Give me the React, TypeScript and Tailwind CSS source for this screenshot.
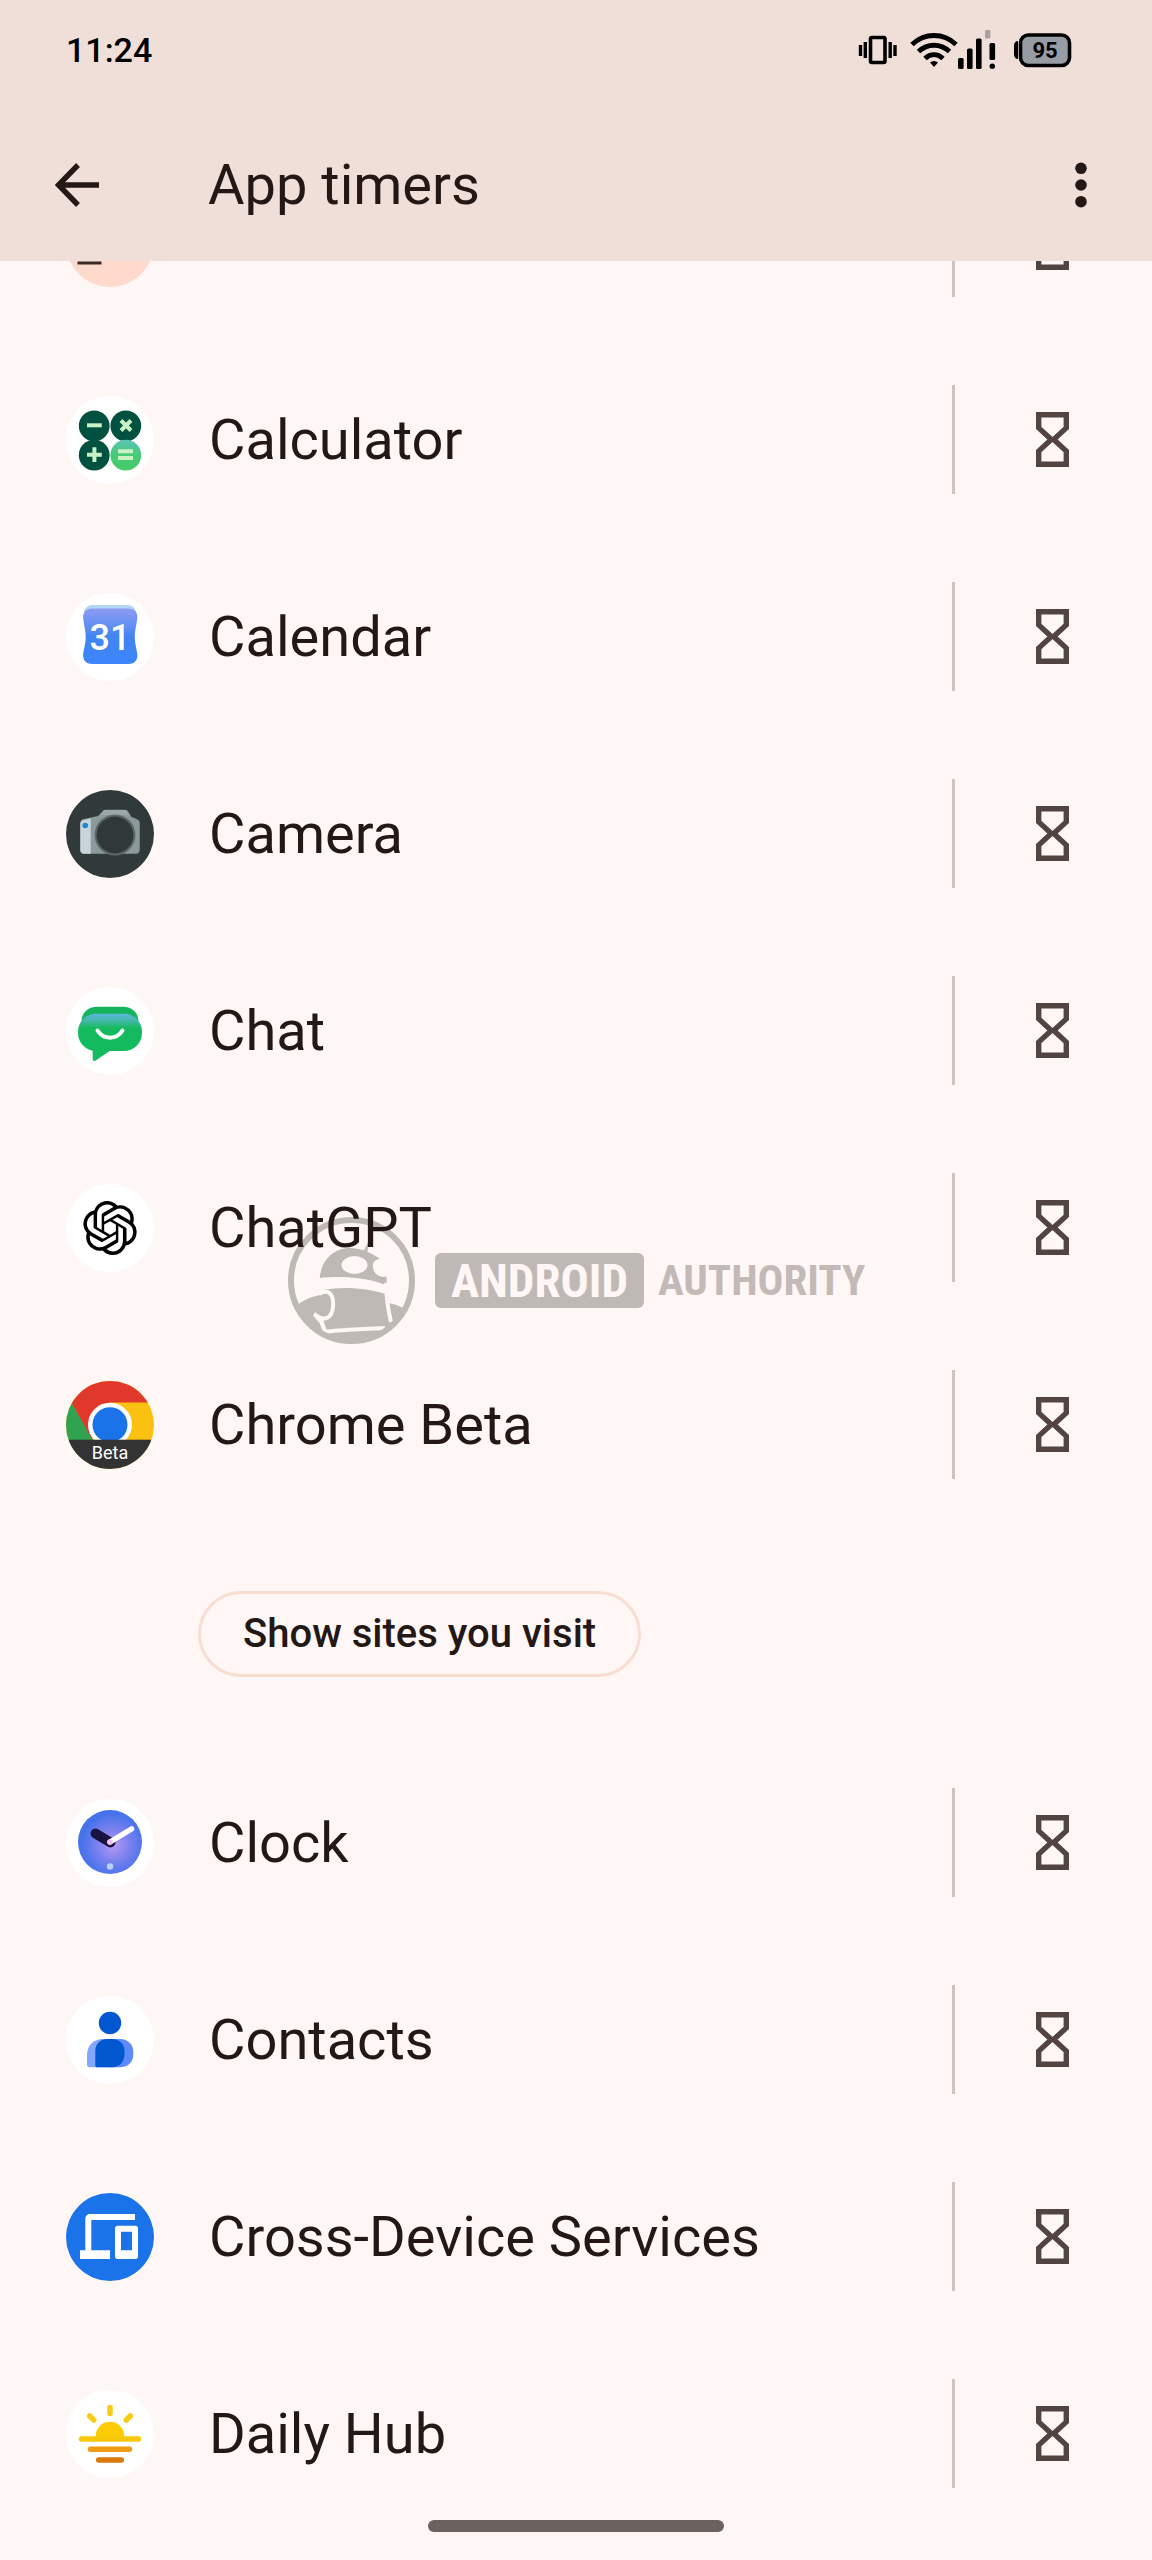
import type { ReactNode } from "react";
import { SiOpenai } from "react-icons/si";

function Disc({ fill = "#ffffff", children }: { fill?: string; children?: ReactNode }) {
  return (
    <svg viewBox="0 0 88 88" className="size-[88px] shrink-0" aria-hidden="true">
      <circle cx="44" cy="44" r="44" fill={fill} />
      {children}
    </svg>
  );
}

function CalculatorIcon() {
  return (
    <Disc>
      <defs>
        <linearGradient id="calc-eq" x1="0" y1="0" x2="0" y2="1">
          <stop offset="0" stopColor="#5cc4b8" />
          <stop offset="0.5" stopColor="#46cb76" />
          <stop offset="1" stopColor="#45cc66" />
        </linearGradient>
      </defs>
      <circle cx="28.2" cy="29.8" r="15.4" fill="#00513f" />
      <circle cx="59.8" cy="29.8" r="15.4" fill="#00513f" />
      <circle cx="28.2" cy="59.2" r="15.4" fill="#00513f" />
      <circle cx="59.8" cy="59.2" r="15.4" fill="url(#calc-eq)" />
      <g stroke="#c9f2c4" strokeWidth="4" fill="none">
        <path d="M21 29.3h14.8" />
        <path d="M55 24.5l10 10M65 24.5l-10 10" />
        <path d="M21 58.7h14.8M28.4 51.3v14.8" />
        <path d="M52 55.3h15M52 62h15" />
      </g>
    </Disc>
  );
}

function CalendarIcon() {
  return (
    <Disc>
      <defs>
        <linearGradient id="cal-bg" x1="0" y1="0" x2="0" y2="1">
          <stop offset="0" stopColor="#8f9bf3" />
          <stop offset="0.28" stopColor="#6690f5" />
          <stop offset="0.5" stopColor="#4285f0" />
          <stop offset="1" stopColor="#3c85fb" />
        </linearGradient>
      </defs>
      <path d="M26 12h36c4 0 7 3 8 7H18c1-4 4-7 8-7z" fill="#b5d6f3" />
      <path
        d="M26 15.500h36.500c6 0 9.500 4 8.800 10-1 8-2.500 12-2.500 18.500 0 6 1.500 10 2.500 17 .8 6-2.800 10-8.800 10H26c-6 0-9.500-4-8.800-10 1-7 2.500-11 2.500-17 0-6.500-1.500-10.500-2.500-18.500-.8-6 2.800-10 8.800-10z"
        fill="url(#cal-bg)"
      />
      <text
        x="44"
        y="57"
        textAnchor="middle"
        fontFamily="Roboto, sans-serif"
        fontSize="36"
        fontWeight="500"
        fill="#ffffff"
      >
        31
      </text>
    </Disc>
  );
}

function CameraIcon() {
  return (
    <Disc fill="#303a3b">
      <path
        d="M18 29l14-3 5-5c1-1 2-1.300 3-1.300h18c2 0 3.500.7 4.500 2.300l3 5 5 2c2 .8 3.200 2 3.200 4V60c0 2.500-1.500 3.700-4 3.700H18c-2.500 0-3.700-1.500-3.700-4V33c0-2.200 1.500-3.500 3.700-4z"
        fill="#8b9a9b"
      />
      <path d="M18 30l6.700-1.600v35.300H18c-2.500 0-3.700-1.500-3.700-4V34c0-2.200 1.500-3.500 3.700-4z" fill="#c8d4d9" />
      <path d="M38 20h22l3 5H34z" fill="#9aa8a9" />
      <circle cx="49" cy="45" r="20.500" fill="#5d6969" />
      <circle cx="49" cy="45" r="18.500" fill="#303938" />
      <circle cx="19.300" cy="35.500" r="2.800" fill="#1b87d8" />
    </Disc>
  );
}

function ChatIcon() {
  return (
    <Disc>
      <defs>
        <linearGradient id="chat-top" x1="0" y1="0" x2="0" y2="1">
          <stop offset="0" stopColor="#5eb6de" />
          <stop offset="0.2" stopColor="#41b8a5" />
          <stop offset="0.38" stopColor="#14bb5e" />
          <stop offset="1" stopColor="#14bb5e" />
        </linearGradient>
      </defs>
      <path d="M31 19.700h26c9 0 15.500 6 15.500 15v6h-57v-6c0-9 6.500-15 15.500-15z" fill="#14b45c" />
      <rect x="12" y="26.700" width="64" height="37.300" rx="18" fill="url(#chat-top)" />
      <path d="M26.700 60v12c0 2 1.500 2.500 3 1.500L44.500 63.500z" fill="#14bb5e" />
      <path d="M31.500 43.500c6 9.500 19 9.500 25 0" fill="none" stroke="#ffffff" strokeWidth="4" strokeLinecap="round" />
    </Disc>
  );
}

function ChatGptIcon() {
  return (
    <span className="flex size-[88px] shrink-0 items-center justify-center rounded-full bg-white">
      <SiOpenai className="size-[54px] text-black" />
    </span>
  );
}

function ChromeBetaIcon() {
  return (
    <Disc fill="#fbc110">
      <clipPath id="chrome-clip">
        <circle cx="44" cy="44" r="44" />
      </clipPath>
      <g clipPath="url(#chrome-clip)">
        <path d="M0 12L30 64 44 88H0z" fill="#30a350" />
        <path d="M0 12V0h88v21.500H44L26 58z" fill="#e1382c" />
        <circle cx="44" cy="43.700" r="22" fill="#ffffff" />
        <circle cx="44" cy="43.700" r="17.500" fill="#1a73e8" />
        <rect x="0" y="58.700" width="88" height="30" fill="#333333" />
        <text x="44" y="78" textAnchor="middle" fontFamily="Roboto, sans-serif" fontSize="18" fill="#ffffff">
          Beta
        </text>
      </g>
    </Disc>
  );
}

function ClockIcon() {
  return (
    <Disc>
      <defs>
        <radialGradient id="clock-face" cx="0.55" cy="0.55" r="0.5">
          <stop offset="0" stopColor="#b79af2" />
          <stop offset="0.5" stopColor="#7b81ef" />
          <stop offset="1" stopColor="#4672eb" />
        </radialGradient>
      </defs>
      <circle cx="44" cy="43" r="32" fill="url(#clock-face)" />
      <path d="M29.500 34.500L44.500 43.500" stroke="#19143f" strokeWidth="10" strokeLinecap="round" />
      <path d="M44 43L65.500 30" stroke="#ffffff" strokeWidth="5.500" strokeLinecap="round" />
      <circle cx="44" cy="43" r="2.800" fill="#f0c3ee" />
      <circle cx="44" cy="67.500" r="3.200" fill="#b5d3fb" />
    </Disc>
  );
}

function ContactsIcon() {
  return (
    <Disc>
      <circle cx="44" cy="27" r="11.200" fill="#0157d0" />
      <path d="M37 43h12v28.300H23.500c-1.600 0-2.500-1-2.500-2.500V59c0-9.500 6.500-16 16-16z" fill="#82a7fc" />
      <path d="M44 43h10c8 0 13.300 5.500 13.300 13v2.500c0 7.500-5.300 12.800-13.300 12.800H44z" fill="#5c8bf8" />
      <path d="M41 43h5c7.500 0 12.500 5 12.500 12.500V58c0 8-5 13.300-13 13.300H31.500c-1.500 0-2.200-.8-2.200-2.300V55c0-7 4.700-12 11.700-12z" fill="#0157d0" />
    </Disc>
  );
}

function CrossDeviceIcon() {
  return (
    <Disc fill="#1a73e8">
      <path d="M69 21v6H25.300v30.300H44V66H14v-8.700h5.300V26c0-3 2-5 5-5z" fill="#ffffff" />
      <path
        d="M51.500 32.700h18c1.500 0 2.500 1 2.500 2.500v28.300c0 1.500-1 2.500-2.500 2.500h-18c-1.500 0-2.500-1-2.500-2.500V35.200c0-1.500 1-2.500 2.500-2.500zM55 38.700V57.200h11V38.700z"
        fill="#ffffff"
        fillRule="evenodd"
      />
    </Disc>
  );
}

function DailyHubIcon() {
  return (
    <Disc>
      <path d="M29.700 48v-2a14.300 14.300 0 0 1 28.600 0v2z" fill="#fbcb04" />
      <g fill="none" strokeWidth="5.500" strokeLinecap="round">
        <path d="M15.500 49h57" stroke="#f8c80d" />
        <path d="M24.500 59.300h39" stroke="#ee9c12" />
        <path d="M32.700 70h22.600" stroke="#d97a0d" />
        <path d="M44 17.500v6M23.700 26l4 4M64.300 26l-4 4" stroke="#f8cc14" />
      </g>
    </Disc>
  );
}

type App = { name: string; icon: ReactNode };

const APPS_BEFORE: App[] = [
  { name: "Calculator", icon: <CalculatorIcon /> },
  { name: "Calendar", icon: <CalendarIcon /> },
  { name: "Camera", icon: <CameraIcon /> },
  { name: "Chat", icon: <ChatIcon /> },
  { name: "ChatGPT", icon: <ChatGptIcon /> },
  { name: "Chrome Beta", icon: <ChromeBetaIcon /> },
];

const APPS_AFTER: App[] = [
  { name: "Clock", icon: <ClockIcon /> },
  { name: "Contacts", icon: <ContactsIcon /> },
  { name: "Cross-Device Services", icon: <CrossDeviceIcon /> },
  { name: "Daily Hub", icon: <DailyHubIcon /> },
];

function Hourglass() {
  return (
    <svg viewBox="0 0 33 55" className="h-[55px] w-[33px]" aria-hidden="true">
      <path
        d="M2.700 2.700h27.600v13.200L17.700 27.500 30.300 39.100v13.200H2.700V39.100L15.300 27.500 2.700 15.900z"
        fill="none"
        stroke="#524440"
        strokeWidth="5.400"
      />
    </svg>
  );
}

function AppRow({ name, icon }: { name?: string; icon: ReactNode }) {
  return (
    <div className="flex h-[197px] shrink-0 items-center pr-0.5 pl-[66px]">
      {icon}
      <span className="min-w-0 flex-1 truncate pl-[55px] text-[56px] leading-[72px]">{name}</span>
      <span className="h-[109px] w-[3px] bg-[#d0c3bf]" />
      <button
        type="button"
        aria-label={name ? `Set timer for ${name}` : "Set timer"}
        className="flex h-full w-[195px] items-center justify-center"
      >
        <Hourglass />
      </button>
    </div>
  );
}

function StatusBar() {
  return (
    <div className="flex h-[100px] items-center justify-between pr-20 pl-[66px] text-black">
      <span className="text-[34px] leading-10 font-medium">11:24</span>
      <div className="flex items-center">
        {/* vibrate */}
        <svg viewBox="0 0 40 40" className="mr-3 size-10" aria-hidden="true">
          <rect x="12.500" y="7.500" width="14.500" height="25" rx="1.500" fill="none" stroke="#000" strokeWidth="3.600" />
          <path d="M2.500 15v11M7.300 12v16M32.200 12v16M37 15v11" stroke="#000" strokeWidth="3.400" />
        </svg>
        {/* wifi */}
        <svg viewBox="0 0 48 40" className="h-10 w-12" aria-hidden="true">
          <g fill="none" stroke="#000" strokeWidth="5">
            <path d="M2 14.500c12.500-12 31.500-12 44 0" />
            <path d="M8.500 21.500c9-8.500 22-8.500 31 0" />
            <path d="M15 28.500c5.500-5 12.500-5 18 0" />
          </g>
          <path d="M20 32.500c2.500-2 5.500-2 8 0L24 37z" fill="#000" />
        </svg>
        {/* signal */}
        <svg viewBox="0 0 38 40" className="mr-[18px] h-10 w-[38px]" aria-hidden="true">
          <g fill="#000">
            <rect x="0" y="28" width="5.600" height="11" rx="1.500" />
            <rect x="9" y="18.500" width="5.600" height="20.500" rx="1.500" />
            <rect x="18" y="8.500" width="5.600" height="30.500" rx="1.500" />
            <rect x="31.500" y="13" width="5.600" height="17" rx="1.500" />
            <circle cx="34.300" cy="36.300" r="2.700" />
          </g>
          <rect x="27" y="0" width="5.400" height="8.500" rx="1" fill="#ab9f9b" />
        </svg>
        {/* battery */}
        <svg viewBox="0 0 58 40" className="h-10 w-[58px]" aria-hidden="true">
          <path d="M4 11v18c-2.500 0-4-2-4-4.500v-9C0 13 1.500 11 4 11z" fill="#000" />
          <rect x="6.500" y="5" width="49" height="30.500" rx="8" fill="#969ca2" stroke="#000" strokeWidth="3.600" />
          <text
            x="31"
            y="28"
            textAnchor="middle"
            fontFamily="Roboto, sans-serif"
            fontSize="22"
            fontWeight="700"
            fill="#000"
          >
            95
          </text>
        </svg>
      </div>
    </div>
  );
}

function TopBar() {
  return (
    <header className="bg-[#f0dfd9]">
      <StatusBar />
      <div className="flex h-[161px] items-start pt-[45px]">
        <button type="button" aria-label="Back" className="flex h-20 w-[154px] items-center pl-[55px]">
          <svg viewBox="0 0 44 44" className="size-11" aria-hidden="true">
            <path d="M23 2L3.500 22 23 42M3.500 22H44" fill="none" stroke="#231815" strokeWidth="5.400" />
          </svg>
        </button>
        <h1 className="flex-1 pl-[54px] text-[56px] leading-20">App timers</h1>
        <button type="button" aria-label="More options" className="flex h-20 w-[142px] items-center justify-center">
          <svg viewBox="0 0 12 46" className="h-[46px] w-3" aria-hidden="true">
            <circle cx="6" cy="6.300" r="5.800" fill="#231815" />
            <circle cx="6" cy="23" r="5.800" fill="#231815" />
            <circle cx="6" cy="39.700" r="5.800" fill="#231815" />
          </svg>
        </button>
      </div>
    </header>
  );
}

function Watermark() {
  return (
    <div className="pointer-events-none absolute inset-0 -z-10 flex items-center justify-center">
      <svg viewBox="0 0 127 127" className="mr-5 size-[127px] shrink-0" aria-hidden="true">
        <clipPath id="aa-clip">
          <circle cx="63.500" cy="63.500" r="62" />
        </clipPath>
        <g clipPath="url(#aa-clip)" fill="#bfb9b6">
          <path d="M0 98C8 86 22 79 34 78l1-5c20-4 44-2 63 4l2 9c8 1 15 4 22 10v31H0z" />
          <path d="M31.700 61C33 44 45 31 62 31c5 0 10 1 14 2.500L81 23l-1.500 12c5 2 9 4 12.500 7-5 0-8 4-7 9 1 6 7 10 13.500 8.500v9C79 60 52 59 31.700 61z" />
        </g>
        <ellipse cx="66.500" cy="48" rx="13" ry="9" fill="#fff7f5" />
        <g fill="none" stroke="#fff7f5" strokeWidth="4">
          <path d="M33 76c9-4 13 3 12 14-1 10-7 15-17 9l6 7 3 9c18-3 40-3 60-4" />
          <path d="M26 97l6 4 5 13" />
          <path d="M98 66c0 14 2 26 5 39" />
        </g>
        <circle cx="63.500" cy="63.500" r="60.500" fill="none" stroke="#bfb9b6" strokeWidth="6" />
      </svg>
      <span className="flex h-[55px] w-[209px] items-center justify-center rounded-md bg-[#bfb9b6] font-['Roboto_Condensed',Roboto,sans-serif] text-[47px] leading-[55px] font-bold text-[#fff7f5]">
        ANDROID
      </span>
      <span className="ml-3.5 w-[206px] font-['Roboto_Condensed',Roboto,sans-serif] text-[43px] leading-[55px] font-bold text-[#c3bab7]">
        AUTHORITY
      </span>
    </div>
  );
}

export default function App() {
  return (
    <div className="relative isolate flex min-h-screen flex-col bg-[#fff7f5] font-[Roboto,sans-serif] text-[#231815]">
      <Watermark />
      <TopBar />

      <main className="flex flex-1 flex-col">
        {/* row scrolled most of the way under the header */}
        <div className="flex h-20 flex-col justify-end overflow-hidden">
          <AppRow
            icon={
              <Disc fill="#fddacc">
                <path d="M11.500 64h24" stroke="#3a2a24" strokeWidth="3" />
              </Disc>
            }
          />
        </div>

        {APPS_BEFORE.map((app) => (
          <AppRow key={app.name} name={app.name} icon={app.icon} />
        ))}

        <div className="flex h-[221px] items-center pl-[198px]">
          <button
            type="button"
            className="h-[86px] rounded-full border-[3px] border-[#f9ddd1] px-[42px] text-[40px] leading-[48px] font-medium"
          >
            Show sites you visit
          </button>
        </div>

        {APPS_AFTER.map((app) => (
          <AppRow key={app.name} name={app.name} icon={app.icon} />
        ))}
      </main>

      <div className="fixed inset-x-0 bottom-7 flex justify-center">
        <span className="h-3 w-[296px] rounded-full bg-[#69625f]" />
      </div>
    </div>
  );
}
